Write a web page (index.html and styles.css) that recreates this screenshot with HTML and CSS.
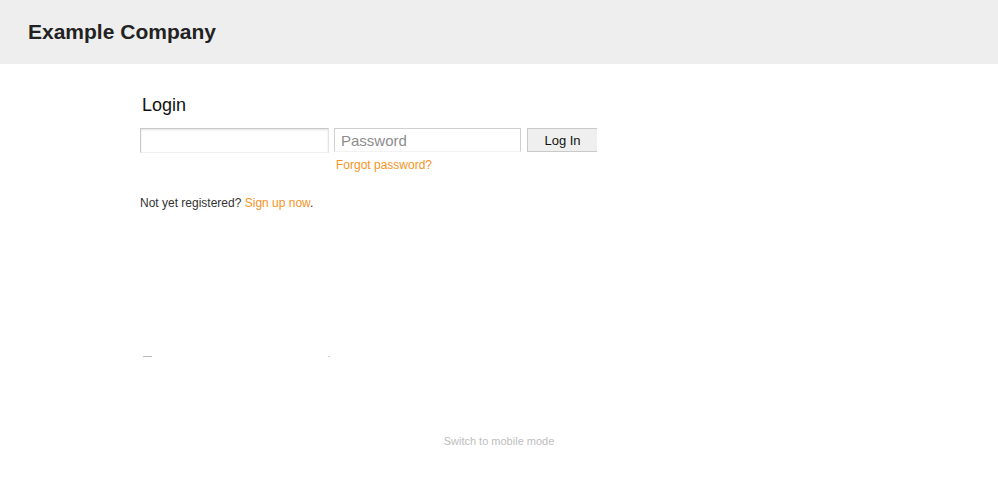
FILE: index.html
```html
<!DOCTYPE html>
<html>
	<head>
		<meta charset="utf-8" />
		<title>Login - Example Company</title>
		<link rel="stylesheet" href="styles.css">
	</head>
	<body>
		<div class="header">
			<h1>Example Company</h1>
		</div>
		<div class="main">
			<h2>Login</h2>
			<form class="login">
				<div class="field">
					<input type="text" class="user">
				</div>
				<div class="field">
					<input type="password" class="pass" placeholder="Password">
					<a href="#" class="forgot">Forgot password?</a>
				</div>
				<div class="field">
					<button type="button" class="btn">Log In</button>
				</div>
			</form>
			<p class="register">Not yet registered? <a href="#">Sign up now</a>.</p>
			<div class="trace"><span class="dash"></span><span class="dot"></span></div>
		</div>
		<div class="footer">
			<a href="#">Switch to mobile mode</a>
		</div>
	</body>
</html>
```

FILE: styles.css
```css
*{
	margin: 0;
	padding: 0;
}
body{
	font-family: "Liberation Sans", Arial, sans-serif;
	color: #333;
	background: #fff;
}
a{
	color: #f7931e;
	text-decoration: none;
}
.header{
	height: 64px;
	background: #eeeeee;
	padding-left: 28px;
	box-sizing: border-box;
}
.header h1{
	font-size: 21px;
	font-weight: bold;
	color: #222;
	line-height: 64px;
}
.main{
	padding-left: 140px;
	padding-top: 30px;
}
.main h2{
	font-size: 18px;
	font-weight: normal;
	color: #111;
	padding-left: 2px;
	line-height: 22px;
}
.login{
	display: flex;
	margin-top: 12px;
	height: 44px;
}
.field{
	display: flex;
	flex-direction: column;
}
.user{
	width: 189px;
	height: 25px;
	border: 1px solid #c8c8c8;
	border-bottom-color: #eee;
	border-right-color: #e2e2e2;
	box-shadow: inset 0 1px 2px rgba(0,0,0,.12);
	box-sizing: border-box;
	outline: none;
}
.pass{
	margin-left: 5px;
	width: 187px;
	height: 24px;
	border: 1px solid #cfcfcf;
	border-bottom-color: #f2f2f2;
	box-sizing: border-box;
	font-family: "Liberation Sans", Arial, sans-serif;
	font-size: 15px;
	padding-left: 6px;
	outline: none;
}
.pass::placeholder{
	color: #8d8d8d;
}
.forgot{
	margin-left: 7px;
	margin-top: 6px;
	font-size: 12px;
}
.btn{
	margin-left: 6px;
	width: 70px;
	height: 24px;
	background: #efefef;
	border: 1px solid #c9c9c9;
	border-right: none;
	font-family: "Liberation Sans", Arial, sans-serif;
	font-size: 13px;
	color: #111;
}
.register{
	font-size: 12px;
	margin-top: 24px;
	line-height: 14px;
}
.trace{
	margin-top: 146px;
	height: 2px;
	width: 190px;
	display: flex;
	justify-content: space-between;
}
.trace .dash{
	margin-left: 3px;
	width: 9px;
	height: 1px;
	background: #bbb;
}
.trace .dot{
	width: 2px;
	height: 1px;
	background: #ccc;
}
.footer{
	text-align: center;
	margin-top: 77px;
	font-size: 11px;
}
.footer a{
	color: #bdbdbd;
}
```
